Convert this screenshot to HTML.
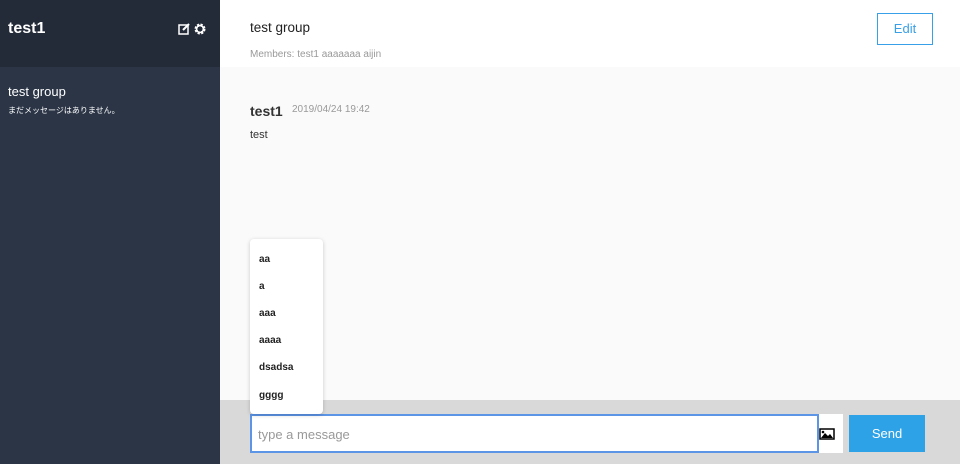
<!DOCTYPE html>
<html><head><style>
*{margin:0;padding:0;box-sizing:border-box}
body{width:960px;height:464px;overflow:hidden;font-family:"Liberation Sans","Noto Sans CJK JP",sans-serif;position:relative;background:#fafafa}
.sb{position:absolute;left:0;top:0;width:220px;height:464px;background:#2b3546}
.sbh{position:absolute;left:0;top:0;width:220px;height:67px;background:#232b39;color:#fff}
.hd{position:absolute;left:220px;top:0;width:740px;height:67px;background:#fff}
.bot{position:absolute;left:220px;top:400px;width:740px;height:64px;background:#d9d9d9}
.dd{position:absolute;left:250px;top:239px;width:73px;height:175px;background:#fff;border-radius:4px;box-shadow:0 1px 4px rgba(0,0,0,.2)}
.dd div{position:absolute;left:9px;font-size:10px;font-weight:bold;color:#222}
</style></head><body>
<div class="sb"></div>
<div class="sbh">
<div style="position:absolute;left:8px;top:20px;font-size:16px;font-weight:bold">test1</div>
<svg style="position:absolute;left:178px;top:23px" width="12" height="12" viewBox="0 0 12 12"><rect x="1" y="2" width="9" height="9" fill="none" stroke="#fff" stroke-width="1.5"/><path d="M5 7 L11 1" stroke="#fff" stroke-width="2"/></svg>
<svg style="position:absolute;left:194px;top:23px" width="12" height="12" viewBox="0 0 12 12"><circle cx="6" cy="6" r="4" fill="none" stroke="#fff" stroke-width="3" stroke-dasharray="2 1.2"/><circle cx="6" cy="6" r="3.5" fill="none" stroke="#fff" stroke-width="1.5"/></svg>
</div>
<div style="position:absolute;left:8px;top:84px;color:#fff;font-size:13px">test group</div>
<div style="position:absolute;left:8px;top:105px;color:#fff;font-size:8px">まだメッセージはありません。</div>
<div class="hd">
<div style="position:absolute;left:30px;top:20px;font-size:13.5px;color:#222">test group</div>
<div style="position:absolute;left:30px;top:49px;font-size:10px;color:#999">Members: test1 aaaaaaa aijin</div>
<div style="position:absolute;left:657px;top:13px;width:56px;height:32px;border:1px solid #38a0e8;color:#38a0e8;font-size:13px;text-align:center;line-height:30px">Edit</div>
</div>
<div style="position:absolute;left:250px;top:103px;font-size:14px;font-weight:bold;color:#333">test1</div>
<div style="position:absolute;left:292px;top:104px;font-size:10px;color:#999">2019/04/24 19:42</div>
<div style="position:absolute;left:250px;top:129px;font-size:11px;color:#333">test</div>
<div class="bot">
<div style="position:absolute;left:30px;top:14px;width:569px;height:39px;background:#fff;border:2px solid #5c94e6;font-size:13px;color:#999;padding:11px 6px">type a message</div>
<div style="position:absolute;left:599px;top:14px;width:24px;height:39px;background:#fff"></div>
<svg style="position:absolute;left:599px;top:28px" width="16" height="12" viewBox="0 0 16 12"><rect x="1" y="1" width="14" height="10" fill="#fff" stroke="#000" stroke-width="1.5"/><path d="M2 10 L6 5 L9 8 L11 6 L14 10Z" fill="#000"/><circle cx="4" cy="4" r="1.3" fill="#000"/></svg>
<div style="position:absolute;left:629px;top:15px;width:76px;height:37px;background:#2ea2e6;color:#fff;font-size:13px;text-align:center;line-height:37px">Send</div>
</div>
<div class="dd">
<div style="top:15px">aa</div><div style="top:42px">a</div><div style="top:69px">aaa</div><div style="top:96px">aaaa</div><div style="top:123px">dsadsa</div><div style="top:151px">gggg</div>
</div>
</body></html>
